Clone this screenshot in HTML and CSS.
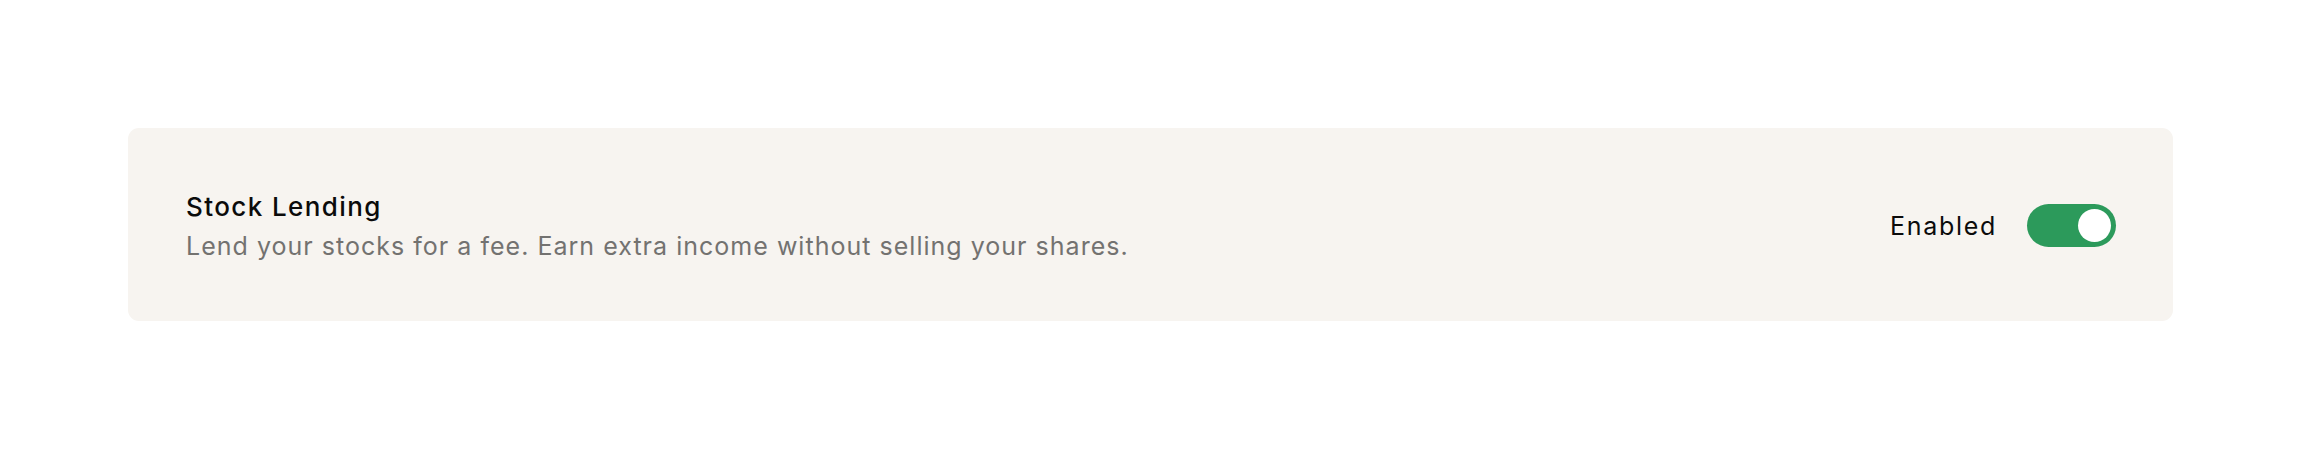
FILE: index.html
```html
<!DOCTYPE html>
<html lang="en">
<head>
<meta charset="utf-8">
<title>Stock Lending</title>
<link rel="stylesheet" href="styles.css">
</head>
<body>
<main class="page">
  <section class="card">
    <div class="info">
      <h2 class="title">Stock Lending</h2>
      <p class="desc">Lend your stocks for a fee. Earn extra income without selling your shares.</p>
    </div>
    <div class="control">
      <span class="state">Enabled</span>
      <button class="toggle on" type="button" aria-pressed="true" aria-label="Stock Lending"><span class="knob"></span></button>
    </div>
  </section>
</main>
</body>
</html>
```
FILE: styles.css
```css
* { box-sizing: border-box; }
html, body { margin: 0; padding: 0; background: #ffffff; }
body {
  font-family: Inter, "Noto Sans", "Liberation Sans", sans-serif;
  color: #111111;
}
.page {
  padding: 128px 128px;
}
.card {
  display: flex;
  align-items: center;
  justify-content: space-between;
  background: #f7f4f0;
  border-radius: 11px;
  padding: 57px 57px 58px 58px;
  min-height: 193px;
}
.info {
  display: flex;
  flex-direction: column;
}
.title {
  margin: 0;
  font-size: 26px;
  font-weight: 500;
  line-height: 44px;
  color: #0b0b0b;
  letter-spacing: 1.4px;
}
.desc {
  margin: 0;
  font-size: 25px;
  font-weight: 400;
  line-height: 34px;
  color: #737270;
  letter-spacing: 1.02px;
}
.control {
  display: flex;
  align-items: center;
  gap: 30px;
  margin-top: 3px;
}
.state {
  font-size: 25px;
  font-weight: 400;
  color: #0b0b0b;
  letter-spacing: 1.7px;
}
.toggle {
  display: flex;
  align-items: center;
  justify-content: flex-end;
  width: 89px;
  height: 43px;
  padding: 0 5px;
  border: none;
  border-radius: 22px;
  background: #2c9a5b;
  cursor: pointer;
}
.knob {
  display: block;
  width: 33px;
  height: 33px;
  border-radius: 50%;
  background: #ffffff;
}
```
